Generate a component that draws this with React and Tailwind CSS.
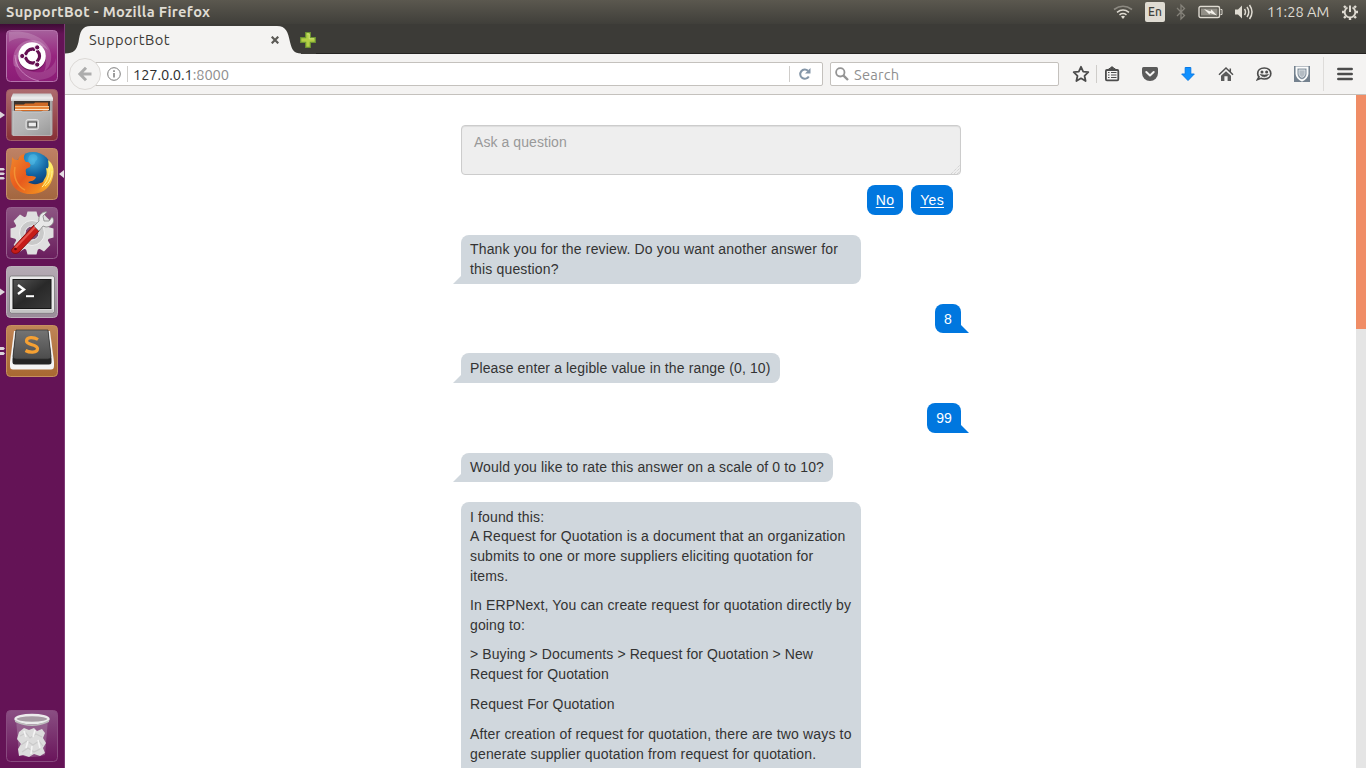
import React from "react";

function Swirl() {
  return (
    <svg viewBox="0 0 52 52" className="h-[52px] w-[52px]">
      <defs>
        <linearGradient id="dash" x1="0" y1="0" x2="0" y2="1">
          <stop offset="0" stopColor="#a6609c" />
          <stop offset="0.5" stopColor="#97257f" />
          <stop offset="1" stopColor="#8b1c76" />
        </linearGradient>
      </defs>
      <rect x="0.5" y="0.5" width="51" height="51" rx="4" fill="url(#dash)" stroke="#b573ac" />
      <path d="M3 2C22 -1 42 8 45 24C46 32 43 38 38 42C43 30 37 16 27 11C20 7 10 7 3 12Z" fill="#fff" opacity="0.17" />
      <path d="M8 36C4 22 14 10 26 10C33 10 39 14 42 20C34 13 22 13 15 20C11 25 10 31 13 38Z" fill="#fff" opacity="0.2" />
      <path d="M16 50C7 42 7 28 12 22C12 36 22 44 36 42C44 40 49 34 50 28V42C44 51 28 51 16 50Z" fill="#fff" opacity="0.13" />
      <path d="M9 25C9 37 19 48 33 51" stroke="#e0a9d9" strokeWidth="1" fill="none" opacity="0.6" />
      <circle cx="26" cy="27" r="14" fill="#4f0a43" opacity="0.5" />
      <circle cx="26" cy="26" r="13.8" fill="#fff" />
      <circle cx="26.5" cy="26" r="7" fill="none" stroke="#650f52" strokeWidth="3.3" />
      <g stroke="#fff" strokeWidth="1.3">
        <path d="M26.5 26H14M26.5 26L32 16.5M26.5 26L32 35.5" />
      </g>
      <circle cx="26.5" cy="26" r="5.2" fill="#fff" />
      <g fill="#650f52" stroke="#fff" strokeWidth="1">
        <circle cx="16.2" cy="26" r="2.6" />
        <circle cx="31.2" cy="17.4" r="2.6" />
        <circle cx="31.2" cy="34.6" r="2.6" />
      </g>
    </svg>
  );
}

function Tile({ id, from, to, edge }) {
  return (
    <>
      <defs>
        <linearGradient id={id} x1="0" y1="0" x2="0" y2="1">
          <stop offset="0" stopColor={from} />
          <stop offset="1" stopColor={to} />
        </linearGradient>
      </defs>
      <rect x="0.5" y="0.5" width="51" height="51" rx="4" fill={`url(#${id})`} stroke={edge} />
    </>
  );
}

function Files() {
  return (
    <svg viewBox="0 0 52 52" className="h-[52px] w-[52px]">
      <Tile id="fi" from="#ad6c6f" to="#872f35" edge="#a35e68" />
      <defs>
        <linearGradient id="fi1" x1="0" y1="0" x2="0" y2="1">
          <stop offset="0" stopColor="#c9c9c9" />
          <stop offset="0.6" stopColor="#ededed" />
          <stop offset="1" stopColor="#cfcfcf" />
        </linearGradient>
        <linearGradient id="fi2" x1="0" y1="0" x2="1" y2="1">
          <stop offset="0" stopColor="#bdbdbd" />
          <stop offset="0.5" stopColor="#b4b4b4" />
          <stop offset="1" stopColor="#989898" />
        </linearGradient>
      </defs>
      <path d="M5.500 10H46.500V45Q46.500 46.500 45 46.500H7Q5.500 46.500 5.500 45Z" fill="#a5a5a5" />
      <path d="M7 4.500H45L47 9V12H5V9Z" fill="url(#fi1)" />
      <rect x="8" y="12" width="36" height="10" fill="#3b332d" />
      <path d="M9 15.500H18L19 14.500H28L29 13.500H42V22H9Z" fill="#d06a25" />
      <rect x="9" y="17" width="34" height="1" fill="#f4c793" />
      <rect x="9" y="18" width="34" height="2" fill="#e8873a" />
      <rect x="9" y="20" width="34" height="1" fill="#ffe6c8" />
      <path d="M7 22H15L17 23.500H35L37 22H45V46.500H7Z" fill="url(#fi2)" stroke="#cccccc" strokeWidth="0.6" />
      <rect x="20" y="30.500" width="12.500" height="10" rx="2" fill="#bdbdbd" stroke="#e2e2e2" />
      <rect x="22" y="33" width="8.500" height="5" fill="#ececec" stroke="#4a4a4a" strokeWidth="1.100" />
    </svg>
  );
}

function Fox() {
  return (
    <svg viewBox="0 0 52 52" className="h-[52px] w-[52px]">
      <Tile id="fx" from="#bf8265" to="#a3663f" edge="#c48f6a" />
      <defs>
        <radialGradient id="globe" cx="0.5" cy="0.2" r="0.8">
          <stop offset="0" stopColor="#3fb1e2" />
          <stop offset="0.5" stopColor="#11629f" />
          <stop offset="1" stopColor="#0a2c62" />
        </radialGradient>
        <linearGradient id="fur" x1="0" y1="0" x2="1" y2="1">
          <stop offset="0" stopColor="#f18a2c" />
          <stop offset="0.5" stopColor="#e85a1d" />
          <stop offset="1" stopColor="#f39a22" />
        </linearGradient>
        <linearGradient id="tail" x1="0" y1="1" x2="0.4" y2="0">
          <stop offset="0" stopColor="#e9641b" />
          <stop offset="0.5" stopColor="#f9b127" />
          <stop offset="1" stopColor="#fff06a" />
        </linearGradient>
      </defs>
      <circle cx="27" cy="23" r="19" fill="url(#globe)" />
      <path d="M24 7C29 5 33 8 31 12C28 13 30 17 26 17C22 16 21 10 24 7Z" fill="#62c2e9" opacity="0.4" />
      <path d="M42 12C48 16 49 24 46 32C43 41 35 46 26 46C21 46 18 45 15 43C26 46 34 41 37 34C39 29 42 28 40 20C43 22 43 17 42 12Z" fill="url(#tail)" />
      <path d="M6 9C8 12 10 12 12 12C13 8 16 6 19 6C17 9 18 12 20 14C24 14 25 16 24 19L20 21C19 24 21 25 20 27C23 29 26 27 30 29C29 33 25 33 22 34C26 37 33 37 38 33C36 41 30 47 22 46C11 45 4 37 4 27C4 20 6 18 6 9Z" fill="url(#fur)" />
      <path d="M9 19C7 29 11 38 19 42" stroke="#f7a23c" strokeWidth="1.5" fill="none" opacity="0.7" />
      <path d="M43 19C44 27 41 34 36 39M46 23C46 30 43 35 39 38" stroke="#fff09a" strokeWidth="1" fill="none" />
    </svg>
  );
}

function Settings() {
  return (
    <svg viewBox="0 0 52 52" className="h-[52px] w-[52px]">
      <Tile id="se" from="#8d5683" to="#6a1d5d" edge="#955f8d" />
      <g fill="#dfdfdf">
        {[0, 45, 90, 135].map((a) => (
          <path key={a} d="M21.500 4.500H30.500L32 10V42L30.500 47.500H21.500L20 42V10Z" transform={`rotate(${a} 26 26)`} />
        ))}
        <circle cx="26" cy="26" r="17.500" />
      </g>
      <circle cx="26" cy="26" r="12.500" fill="#c9c9c9" stroke="#efefef" />
      <circle cx="26" cy="26" r="7" fill="#7b4a73" stroke="#f4f4f4" />
      <path d="M6 42L28 18L34 23L13 45C10 48 4 46 6 42Z" fill="#c61c19" stroke="#8d1010" />
      <path d="M9 41L29 20" stroke="#e6554c" strokeWidth="2" />
      <circle cx="9.5" cy="42" r="1.3" fill="#5c0b0b" />
      <path d="M28 19L33 14C32 9 36 4 41 5L37 9L38 14L43 14L46 10C50 14 46 20 40 20L37 19L33 24Z" fill="#e8e8e8" stroke="#858585" strokeWidth="0.8" />
    </svg>
  );
}

function Terminal() {
  return (
    <svg viewBox="0 0 52 52" className="h-[52px] w-[52px]">
      <Tile id="te" from="#b5abb4" to="#9a8c99" edge="#bcb0bb" />
      <defs>
        <linearGradient id="te2" x1="0" y1="0" x2="1" y2="1">
          <stop offset="0" stopColor="#555" />
          <stop offset="0.5" stopColor="#292929" />
          <stop offset="1" stopColor="#3a3a3a" />
        </linearGradient>
      </defs>
      <rect x="3.500" y="10" width="45" height="37" rx="2" fill="#e9e9e9" stroke="#777" strokeWidth="0.8" />
      <rect x="4.500" y="43.500" width="43" height="2.500" fill="#c4c4c4" />
      <rect x="7" y="13.500" width="38" height="29" fill="url(#te2)" stroke="#161616" />
      <path d="M12 19L18 23.5L12 28" stroke="#fff" strokeWidth="2.4" fill="none" />
      <path d="M20 30.2H28" stroke="#fff" strokeWidth="2" />
    </svg>
  );
}

function Sublime() {
  return (
    <svg viewBox="0 0 52 52" className="h-[52px] w-[52px]">
      <Tile id="su" from="#c08557" to="#a86832" edge="#c7905f" />
      <defs>
        <linearGradient id="su2" x1="0" y1="0" x2="0" y2="1">
          <stop offset="0" stopColor="#747474" />
          <stop offset="1" stopColor="#4c4c4c" />
        </linearGradient>
      </defs>
      <path d="M8 6H44L48 37V41Q48 44.500 45 44.500H7Q4 44.500 4 41V37Z" fill="#f4f4f4" />
      <path d="M10 5H42L45.500 34V37Q45.500 39.500 43 39.500H9Q6.500 39.500 6.500 37V34Z" fill="#242424" />
      <path d="M10 5H42L45 31Q45 34 42 34H10Q7 34 7 31Z" fill="url(#su2)" stroke="#303030" strokeWidth="0.7" />
      <path d="M32 14.500C28 12 20.500 11.500 20.500 16C20.500 20.500 31.500 19 31.500 23.500C31.500 28.500 23 27.500 19.500 25.500" fill="none" stroke="#f5a033" strokeWidth="3.2" />
    </svg>
  );
}

function Trash() {
  return (
    <svg viewBox="0 0 52 52" className="h-[52px] w-[52px]">
      <Tile id="tr" from="#8a4f83" to="#69145a" edge="#884a7f" />
      <path d="M10 9H42L39 45Q26 49 13 45Z" fill="#c8b5c6" opacity="0.3" />
      <path d="M13 22L18 18L23 20L28 18L31 21L36 19L39 23L37 28L40 33L37 38L39 43L34 46L28 44L23 47L17 45L13 46L12 39L15 34L11 29Z" fill="#dcdcdc" />
      <path d="M14 26L20 23L24 28L30 24L36 27M15 35L21 31L27 35L33 31L37 36M16 42L22 38L28 42L34 39" stroke="#cacaca" strokeWidth="1.2" fill="none" />
      <path d="M18 21L20 27M29 20L27 27M22 31L20 38M32 30L34 38M26 36L25 44" stroke="#f4f4f4" strokeWidth="1.6" />
      <ellipse cx="26" cy="9" rx="16.5" ry="4" fill="#a79ca4" stroke="#ececec" strokeWidth="2.4" />
      <path d="M9 10Q26 19 43 10V12Q26 20 9 12Z" fill="#bcbcbc" />
    </svg>
  );
}

function Marks({ count }) {
  return (
    <svg viewBox="0 0 6 14" className="h-[14px] w-[6px] shrink-0">
      {count === 1 && <path d="M0 3.5V10.500L5 7Z" fill="#dcd5da" />}
      {count === 2 && <path d="M0 3H3.500L5 4.500L3.500 6H0ZM0 8H3.500L5 9.500L3.500 11H0Z" fill="#dcd5da" />}
      {count === 3 && <path d="M0 1H3.500L5 2.200L3.500 3.500H0ZM0 5.500H3.500L5 6.700L3.500 8H0ZM0 10H3.500L5 11.200L3.500 12.500H0Z" fill="#dcd5da" />}
    </svg>
  );
}

function Slot({ count = 0, active, children }) {
  return (
    <div className="flex h-[52px] items-center">
      <Marks count={count} />
      {children}
      {active && (
        <svg viewBox="0 0 6 10" className="h-[10px] w-[6px] shrink-0">
          <path d="M6 1V9L1 5Z" fill="#e5dfe4" />
        </svg>
      )}
    </div>
  );
}

function Launcher() {
  return (
    <nav className="flex w-[65px] shrink-0 flex-col border-r border-[#7e3a75] bg-[#641356] bg-linear-to-b from-[#3f0b36] via-[#641356] via-[10px] to-[#641356] pt-[6px] pb-[6px]">
      <div className="flex flex-col gap-[7px]">
        <Slot><Swirl /></Slot>
        <Slot count={1}><Files /></Slot>
        <Slot count={3} active><Fox /></Slot>
        <Slot><Settings /></Slot>
        <Slot count={1}><Terminal /></Slot>
        <Slot count={2}><Sublime /></Slot>
      </div>
      <div className="mt-auto">
        <Slot><Trash /></Slot>
      </div>
    </nav>
  );
}

function SystemBar() {
  return (
    <header className="flex h-6 shrink-0 items-center bg-linear-to-b from-[#5b584f] to-[#403f3a] pr-[7px] pl-[6px] text-[#dfdbd2]">
      <span className="text-[14.67px] leading-none font-bold tracking-[0.34px] whitespace-nowrap">SupportBot - Mozilla Firefox</span>
      <div className="ml-auto flex h-6 items-center">
        <svg viewBox="0 0 20 16" className="mr-[12px] h-4 w-5" fill="none" strokeWidth="1.6">
          <path d="M1 5.500Q10 -1 19 5.500" stroke="#8d8a82" />
          <path d="M4 8.300Q10 3.800 16 8.300M6.500 10.800Q10 8.200 13.500 10.800" stroke="#dfdbd2" />
          <path d="M8 12.500Q10 11.200 12 12.500L10 15Z" fill="#dfdbd2" />
        </svg>
        <span className="mr-[11px] flex h-5 w-5 items-center justify-center rounded-[2px] bg-[#dfdbd2] text-[12px] leading-none font-medium text-[#403f3a]">En</span>
        <svg viewBox="0 0 10 18" className="mr-[12px] h-[18px] w-[10px]" fill="none" stroke="#85827a" strokeWidth="1.3">
          <path d="M1 5L8.500 12.500L5 16V2L8.500 5.500L1 13" />
        </svg>
        <svg viewBox="0 0 25 14" className="mr-[11px] h-[14px] w-[25px]">
          <rect x="1" y="1.500" width="20.500" height="11" rx="1.500" fill="none" stroke="#dfdbd2" strokeWidth="1.400" />
          <rect x="3" y="3.500" width="16.500" height="7" fill="#928f87" />
          <path d="M22.500 4.500H24V9.500H22.500" stroke="#dfdbd2" fill="none" />
          <path d="M6 4L12.500 6.500L13.500 4.500L19 10.500L12 8L11.500 9.500Z" fill="#f3f0ea" />
        </svg>
        <svg viewBox="0 0 20 18" className="mr-[13px] h-[18px] w-5" fill="none" stroke="#dfdbd2" strokeWidth="1.500">
          <path d="M1 6.500H4L8 2.500V15.500L4 11.500H1Z" fill="#dfdbd2" stroke="none" />
          <path d="M10.500 6Q12.500 9 10.500 12M13 4Q16.500 9 13 14M15.500 2Q20.500 9 15.500 16" />
        </svg>
        <span className="mr-[11px] w-[63px] text-[14.67px] leading-none whitespace-nowrap">11:28 AM</span>
        <svg viewBox="0 0 18 18" className="h-[18px] w-[18px]" fill="none" stroke="#dfdbd2">
          <path d="M6.500 4.500A5.300 5.300 0 1 0 11.500 4.500" strokeWidth="1.800" />
          <path d="M9 2.500V9" strokeWidth="2" />
          <path d="M4.700 4.700L3 3M13.300 4.700L15 3M3.500 9H1M14.500 9H17M4.700 13.300L3 15M13.300 13.300L15 15M9 14.500V17" strokeWidth="2.400" />
        </svg>
      </div>
    </header>
  );
}

function TabStrip() {
  return (
    <div className="flex h-[30px] shrink-0 bg-[#3c3b37]">
      <div className="relative h-[30px] w-[236px] shrink-0">
        <svg viewBox="0 0 236 30" className="absolute inset-0 h-[30px] w-[236px]">
          <path d="M0 29.500C9 29.500 11.500 26 13.500 18C15 8 16.500 2 26 2H212C221 2 223 8 225 18C227 26 229 29.500 236 29.500V30H0Z" fill="#f4f3f2" />
        </svg>
        <div className="relative flex h-8 items-center pl-[24px] text-[14.67px] text-[#3c3b37]">
          <span className="w-[182px] tracking-[0.42px]">SupportBot</span>
          <svg viewBox="0 0 8 8" className="h-2 w-2" stroke="#5b5a56" strokeWidth="2.200">
            <path d="M0.700 0.700L7.300 7.300M7.300 0.700L0.700 7.300" />
          </svg>
        </div>
      </div>
      <svg viewBox="0 0 16 16" className="mt-[8px] -ml-[1px] h-4 w-4">
        <path d="M5.700 0.700H10.300V5.700H15.300V10.300H10.300V15.300H5.700V10.300H0.700V5.700H5.700Z" fill="#b3cf45" stroke="#6c9331" strokeWidth="1.200" />
        <path d="M6.800 1.900H9.200V6.800H14.100" stroke="#cfe27a" fill="none" />
      </svg>
      <div className="grow border-b border-[#252422]" />
    </div>
  );
}

function ToolbarIcons() {
  return (
    <div className="flex h-full items-center">
      <svg viewBox="0 0 18 18" className="h-[18px] w-[18px]" fill="none" stroke="#4c4c4c" strokeWidth="1.800" strokeLinejoin="round">
        <path d="M9 1.800L11.200 6.700L16.300 7.200L12.500 10.800L13.600 16L9 13.300L4.400 16L5.500 10.800L1.700 7.200L6.800 6.700Z" />
      </svg>
      <div className="ml-[6px] h-[18px] w-px bg-[#cfcdca]" />
      <svg viewBox="0 0 16 16" className="ml-[7px] h-4 w-4" fill="none" stroke="#4c4c4c">
        <rect x="1.900" y="4" width="12.400" height="10.300" rx="1" strokeWidth="1.800" />
        <path d="M5 3.500V2.500H6.500L7 1H9L9.500 2.500H11V3.500Z" fill="#4c4c4c" />
        <path d="M4 6.500H5.500M7 6.500H12.500M4 9H5.500M7 9H12.500M4 11.500H5.500M7 11.500H12.500" strokeWidth="1.200" />
      </svg>
      <svg viewBox="0 0 16 16" className="ml-[22px] h-4 w-4">
        <path d="M1.500 1H14.500Q16 1 16 2.500V7A8 8 0 0 1 0 7V2.500Q0 1 1.500 1Z" fill="#5a5a5a" />
        <path d="M4.300 6L8 9.500L11.700 6" stroke="#f4f3f2" strokeWidth="2" fill="none" strokeLinecap="round" strokeLinejoin="round" />
      </svg>
      <svg viewBox="0 0 16 16" className="ml-[22px] h-4 w-4">
        <path d="M5.200 1.500H10.800V8H14.300L8 14.500L1.700 8H5.200Z" fill="#1091ff" stroke="#0879e6" strokeLinejoin="round" />
      </svg>
      <svg viewBox="0 0 16 16" className="ml-[22px] h-4 w-4" fill="#4c4c4c">
        <path d="M8 5.200L13 9.800V15H9.600V10.200H6.400V15H3V9.800Z" fill="#5c5c5c" />
        <path d="M1 8.700L8 2L15 8.700M12.300 2.500V6" stroke="#505050" strokeWidth="1.500" fill="none" />
      </svg>
      <svg viewBox="0 0 16 16" className="ml-[22px] h-4 w-4" fill="none" stroke="#4c4c4c">
        <path d="M8.300 2C12.500 2 14.800 4.500 14.800 7.500S12.500 13 8.300 13C7 13 6 12.800 5 12.300L1.500 13.500L3 10.800C2.200 10 1.700 8.800 1.700 7.500C1.700 4.500 4 2 8.300 2Z" strokeWidth="1.700" />
        <circle cx="6" cy="5.900" r="1.500" fill="#4c4c4c" stroke="none" />
        <circle cx="10.600" cy="5.900" r="1.500" fill="#4c4c4c" stroke="none" />
        <path d="M4 8.300Q8.300 9.600 12.600 8.300Q11 11 8.300 11Q5.500 11 4 8.300Z" fill="#4c4c4c" strokeWidth="0.500" />
      </svg>
      <svg viewBox="0 0 16 16" className="ml-[22px] h-4 w-4">
        <rect width="16" height="16" fill="#74818e" />
        <path d="M2.500 1.500H13.500V8Q13 12.500 8 14.500Q3 12.500 2.500 8Z" fill="#8995a1" stroke="#fbfcfc" strokeWidth="1.900" />
        <path d="M5 4H11V8Q10.500 10.500 8 11.500Q5.500 10.500 5 8Z" fill="#b4bcc3" stroke="#dfe4e8" strokeWidth="0.800" />
      </svg>
      <div className="ml-[13px] h-[34px] w-px bg-[#dedcda]" />
      <svg viewBox="0 0 16 14" className="ml-[13px] h-[14px] w-4" stroke="#4c4c4c" strokeWidth="2.500" strokeLinecap="round">
        <path d="M1.300 2H14.700M1.300 7H14.700M1.300 12H14.700" />
      </svg>
    </div>
  );
}

function NavBar() {
  return (
    <div className="flex h-[41px] shrink-0 items-center border-b border-[#c4c1bd] bg-[#f4f3f2] pr-[13px] pl-[4px] text-[14.67px]">
      <div className="relative z-10 flex h-8 w-8 shrink-0 items-center justify-center rounded-full border border-[#dcd9d6] bg-[#f4f3f2]">
        <svg viewBox="0 0 16 16" className="h-4 w-4" fill="none" stroke="#adadad" strokeWidth="3">
          <path d="M9 1.800L2.900 8L9 14.200M3.500 8H14.500" />
        </svg>
      </div>
      <div className="-ml-[6px] flex h-6 w-[728px] shrink-0 items-center rounded-r-[2px] border border-[#c4c1bd] bg-white pl-[11px]">
        <svg viewBox="0 0 14 14" className="h-[14px] w-[14px]" fill="none" stroke="#7c7c7c">
          <circle cx="7" cy="7" r="6.300" />
          <path d="M7 6V10.500M7 3.300V5" strokeWidth="1.500" />
        </svg>
        <div className="ml-[6px] h-4 w-px bg-[#cfcdca]" />
        <span className="ml-[5px] pt-[2px] tracking-[-0.08px] text-[#2e2e2e]">127.0.0.1<span className="text-[#8f8f8f]">:8000</span></span>
        <div className="ml-auto h-4 w-px bg-[#cfcdca]" />
        <svg viewBox="0 0 14 14" className="mr-[10px] ml-[8px] h-[14px] w-[14px]" fill="none" stroke="#8496a8" strokeWidth="2">
          <path d="M10.800 9.500A4.600 4.600 0 1 1 10 3.800" />
          <path d="M12.500 1V6.500H7Z" fill="#8496a8" stroke="none" />
        </svg>
      </div>
      <div className="ml-[7px] flex h-6 w-[229px] shrink-0 items-center rounded-[2px] border border-[#c4c1bd] bg-white pl-[4px]">
        <svg viewBox="0 0 14 14" className="h-[14px] w-[14px]" fill="none" stroke="#949494">
          <circle cx="5.300" cy="5.300" r="4.200" strokeWidth="1.800" />
          <path d="M8.300 8.300L13 13" strokeWidth="2.400" />
        </svg>
        <span className="ml-[5px] pt-[2px] tracking-[0.2px] text-[#8f8f8f]">Search</span>
      </div>
      <div className="ml-auto h-full"><ToolbarIcons /></div>
    </div>
  );
}

function BotBubble({ tail = true, className = "", children }) {
  return (
    <div className={`relative max-w-[400px] self-start rounded-lg bg-[#d0d7dd] px-[9px] pt-[5.7px] pb-[4.3px] text-[#333] ${tail ? "rounded-bl-none" : ""} ${className}`}>
      {children}
      {tail && (
        <svg viewBox="0 0 8 8" className="absolute bottom-0 -left-[8px] h-2 w-[8px]">
          <path d="M8 0V8H0Z" fill="#d0d7dd" />
        </svg>
      )}
    </div>
  );
}

function UserBubble({ children }) {
  return (
    <div className="relative self-end rounded-lg rounded-br-none bg-[#0077df] px-[9px] pt-[5.7px] pb-[4.3px] text-white">
      {children}
      <svg viewBox="0 0 8 8" className="absolute -right-[8px] bottom-0 h-2 w-[8px]">
        <path d="M0 0V8H8Z" fill="#0077df" />
      </svg>
    </div>
  );
}

function Choice({ children }) {
  return <a className="rounded-lg bg-[#0077df] px-[9px] pt-[5.6px] pb-[4.4px] tracking-[0.3px] text-white underline underline-offset-2">{children}</a>;
}

function Chat() {
  return (
    <div className="ml-[396px] flex w-[500px] flex-col pt-[30px] font-['Liberation_Sans',Arial,sans-serif] text-[14px] leading-[19.6px] tracking-[0.14px]">
      <div className="relative h-[50px] rounded-[4px] border border-[#ccc] bg-[#eee] px-3 pt-[7px] tracking-[0.07px] text-[#999] shadow-[inset_0_1px_1px_rgba(0,0,0,0.075)]">
        Ask a question
        <svg viewBox="0 0 9 9" className="absolute right-0 bottom-0 h-[9px] w-[9px]" stroke="#c9c9c9" strokeDasharray="1 1">
          <path d="M0 9L9 0M3 9L9 3M6 9L9 6" />
        </svg>
      </div>
      <div className="mt-[10px] mr-[8px] flex justify-end gap-2">
        <Choice>No</Choice>
        <Choice>Yes</Choice>
      </div>
      <div className="mt-[20.1px] flex flex-col gap-5">
        <BotBubble className="tracking-[0.165px]">Thank you for the review. Do you want another answer for this question?</BotBubble>
        <UserBubble>8</UserBubble>
        <BotBubble className="tracking-[0.13px]">Please enter a legible value in the range (0, 10)</BotBubble>
        <UserBubble>99</UserBubble>
        <BotBubble className="tracking-[0.125px]">Would you like to rate this answer on a scale of 0 to 10?</BotBubble>
        <BotBubble>
          <p>I found this:</p>
          <p className="mb-[10px]">A Request for Quotation is a document that an organization submits to one or more suppliers eliciting quotation for items.</p>
          <p className="mb-[10px]">In ERPNext, You can create request for quotation directly by going to:</p>
          <p className="mb-[10.8px] tracking-[0.09px]">&gt; Buying &gt; Documents &gt; Request for Quotation &gt; New Request for Quotation</p>
          <p className="mb-[10px]">Request For Quotation</p>
          <p className="mb-[10px] tracking-[0.155px]">After creation of request for quotation, there are two ways to generate supplier quotation from request for quotation.</p>
        </BotBubble>
      </div>
    </div>
  );
}

export default function App() {
  return (
    <div className="flex h-screen w-full flex-col overflow-hidden bg-white font-['Ubuntu','Noto_Sans',sans-serif]">
      <SystemBar />
      <div className="flex min-h-0 grow">
        <Launcher />
        <div className="flex min-w-0 grow flex-col">
          <TabStrip />
          <NavBar />
          <main className="flex min-h-0 grow overflow-hidden">
            <div className="min-w-0 grow overflow-hidden"><Chat /></div>
            <div className="w-[10px] shrink-0 bg-[#e5e5e5]">
              <div className="h-[234px] bg-[#f08d66]" />
            </div>
          </main>
        </div>
      </div>
    </div>
  );
}
